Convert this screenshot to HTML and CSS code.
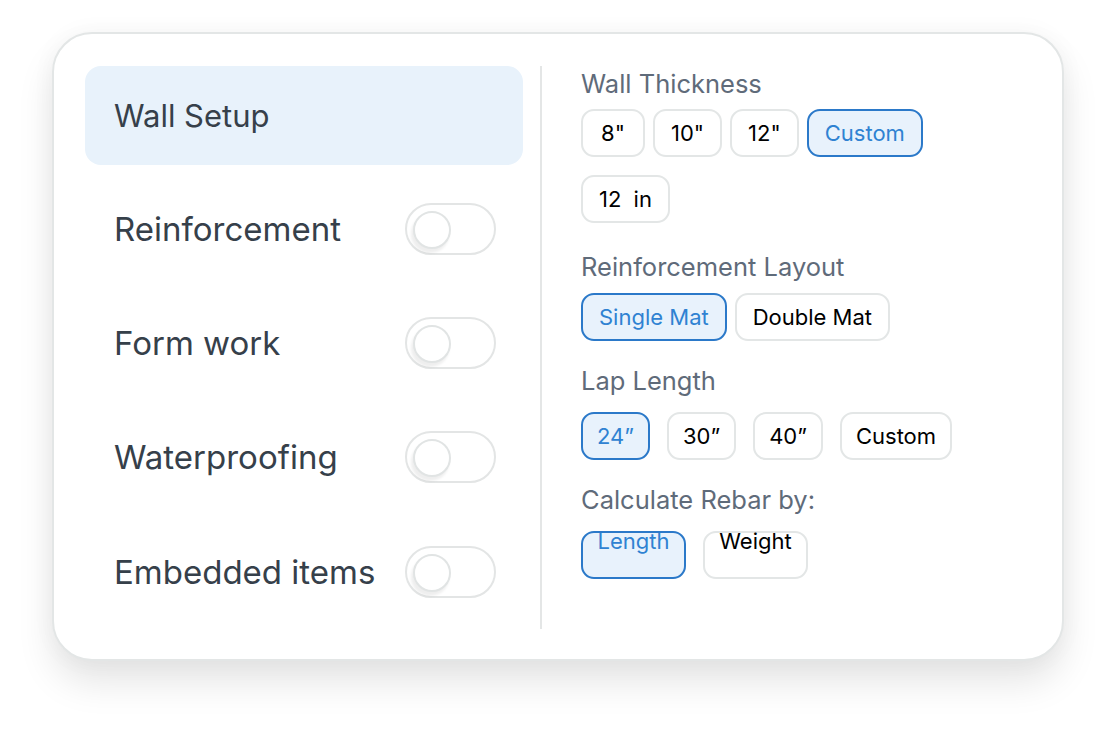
FILE: index.html
```html
<!DOCTYPE html>
<html>
<head>
<meta charset="utf-8">
<link rel="stylesheet" href="styles.css">
</head>
<body>
<div class="card">
  <div class="menu">
    <div class="menu-active">Wall Setup</div>
    <div class="menu-row"><span>Reinforcement</span><span class="toggle"><span class="knob"></span></span></div>
    <div class="menu-row"><span>Form work</span><span class="toggle"><span class="knob"></span></span></div>
    <div class="menu-row"><span>Waterproofing</span><span class="toggle"><span class="knob"></span></span></div>
    <div class="menu-row"><span>Embedded items</span><span class="toggle"><span class="knob"></span></span></div>
  </div>
  <div class="divider"></div>
  <div class="options">
    <div class="section s1">
      <div class="label">Wall Thickness</div>
      <div class="chips tight">
        <span class="chip">8"</span>
        <span class="chip">10"</span>
        <span class="chip">12"</span>
        <span class="chip on">Custom</span>
        <span class="chip spaced">12 in</span>
      </div>
    </div>
    <div class="section s2">
      <div class="label">Reinforcement Layout</div>
      <div class="chips tight">
        <span class="chip on">Single Mat</span>
        <span class="chip">Double Mat</span>
      </div>
    </div>
    <div class="section s3">
      <div class="label">Lap Length</div>
      <div class="chips wide">
        <span class="chip on">24”</span>
        <span class="chip">30”</span>
        <span class="chip">40”</span>
        <span class="chip">Custom</span>
      </div>
    </div>
    <div class="section s4">
      <div class="label">Calculate Rebar by:</div>
      <div class="chips wide">
        <span class="chip top on">Length</span>
        <span class="chip top">Weight</span>
      </div>
    </div>
  </div>
</div>
</body>
</html>
```

FILE: styles.css
```css
* { box-sizing: border-box; }
html, body { margin: 0; padding: 0; background: #fff; }
body {
  font-family: Inter, "Noto Sans", "Liberation Sans", sans-serif;
  width: 1116px;
  height: 732px;
  overflow: hidden;
}
.card {
  margin: 32px 0 0 52px;
  width: 1012px;
  height: 629px;
  border: 2px solid #e3e6e6;
  border-radius: 40px;
  background: #fff;
  box-shadow: 0 22px 36px rgba(0,0,0,0.10), 0 0 24px rgba(0,0,0,0.04);
  padding: 32px 0 30px 31px;
  display: flex;
}
.menu {
  width: 438px;
  display: flex;
  flex-direction: column;
}
.menu-active {
  height: 100px;
  border-radius: 16px;
  background: #e8f2fb;
  color: #36404a;
  font-size: 31px;
  display: flex;
  align-items: center;
  padding-left: 29px;
  margin-bottom: 6px;
}
.menu-row {
  height: 115px;
  display: flex;
  align-items: center;
  justify-content: space-between;
  padding: 0 27px 0 29px;
  font-size: 33px;
  color: #36404a;
}
.toggle {
  position: relative;
  width: 91px;
  height: 52px;
  border: 2px solid #e3e5e5;
  border-radius: 26px;
  background: #fff;
}
.knob {
  position: absolute;
  left: 6px;
  top: 6px;
  width: 38px;
  height: 38px;
  border-radius: 50%;
  border: 2px solid #e1e4e4;
  background: #fff;
  box-shadow: -2px 4px 3px rgba(0,0,0,0.07);
}
.divider {
  width: 2px;
  background: #e4e6e6;
  margin-left: 17px;
  margin-right: 39px;
}
.options {
  display: flex;
  flex-direction: column;
}
.label {
  font-size: 25.5px;
  color: #5f6b7a;
  line-height: 30px;
}
.s1 { margin-top: 3px; }
.s1 .label { margin-bottom: 10px; }
.s2 { margin-top: 29px; }
.s2 .label { margin-bottom: 11px; }
.s3 { margin-top: 25px; }
.s3 .label { margin-bottom: 16px; }
.s4 { margin-top: 25px; }
.s4 .label { margin-bottom: 16px; }
.chips {
  display: flex;
  flex-wrap: wrap;
  width: 400px;
}
.chips.tight { column-gap: 8px; row-gap: 18px; }
.chips.wide { column-gap: 17px; row-gap: 18px; }
.chip {
  height: 48px;
  min-width: 64px;
  padding: 0 14px;
  border: 2px solid #e3e6e6;
  border-radius: 13px;
  background: #fff;
  color: #000;
  font-size: 22px;
  display: flex;
  align-items: center;
  justify-content: center;
}
.chips.tight .chip { padding: 0 16px; }
.chip.spaced { word-spacing: 6px; }
.chip.on {
  background: #e8f2fc;
  border-color: #2b79c9;
  color: #2f82d2;
}
.chip.top {
  align-items: flex-start;
  line-height: 16px;
  padding: 0 10px;
  width: 105px;
}
```
